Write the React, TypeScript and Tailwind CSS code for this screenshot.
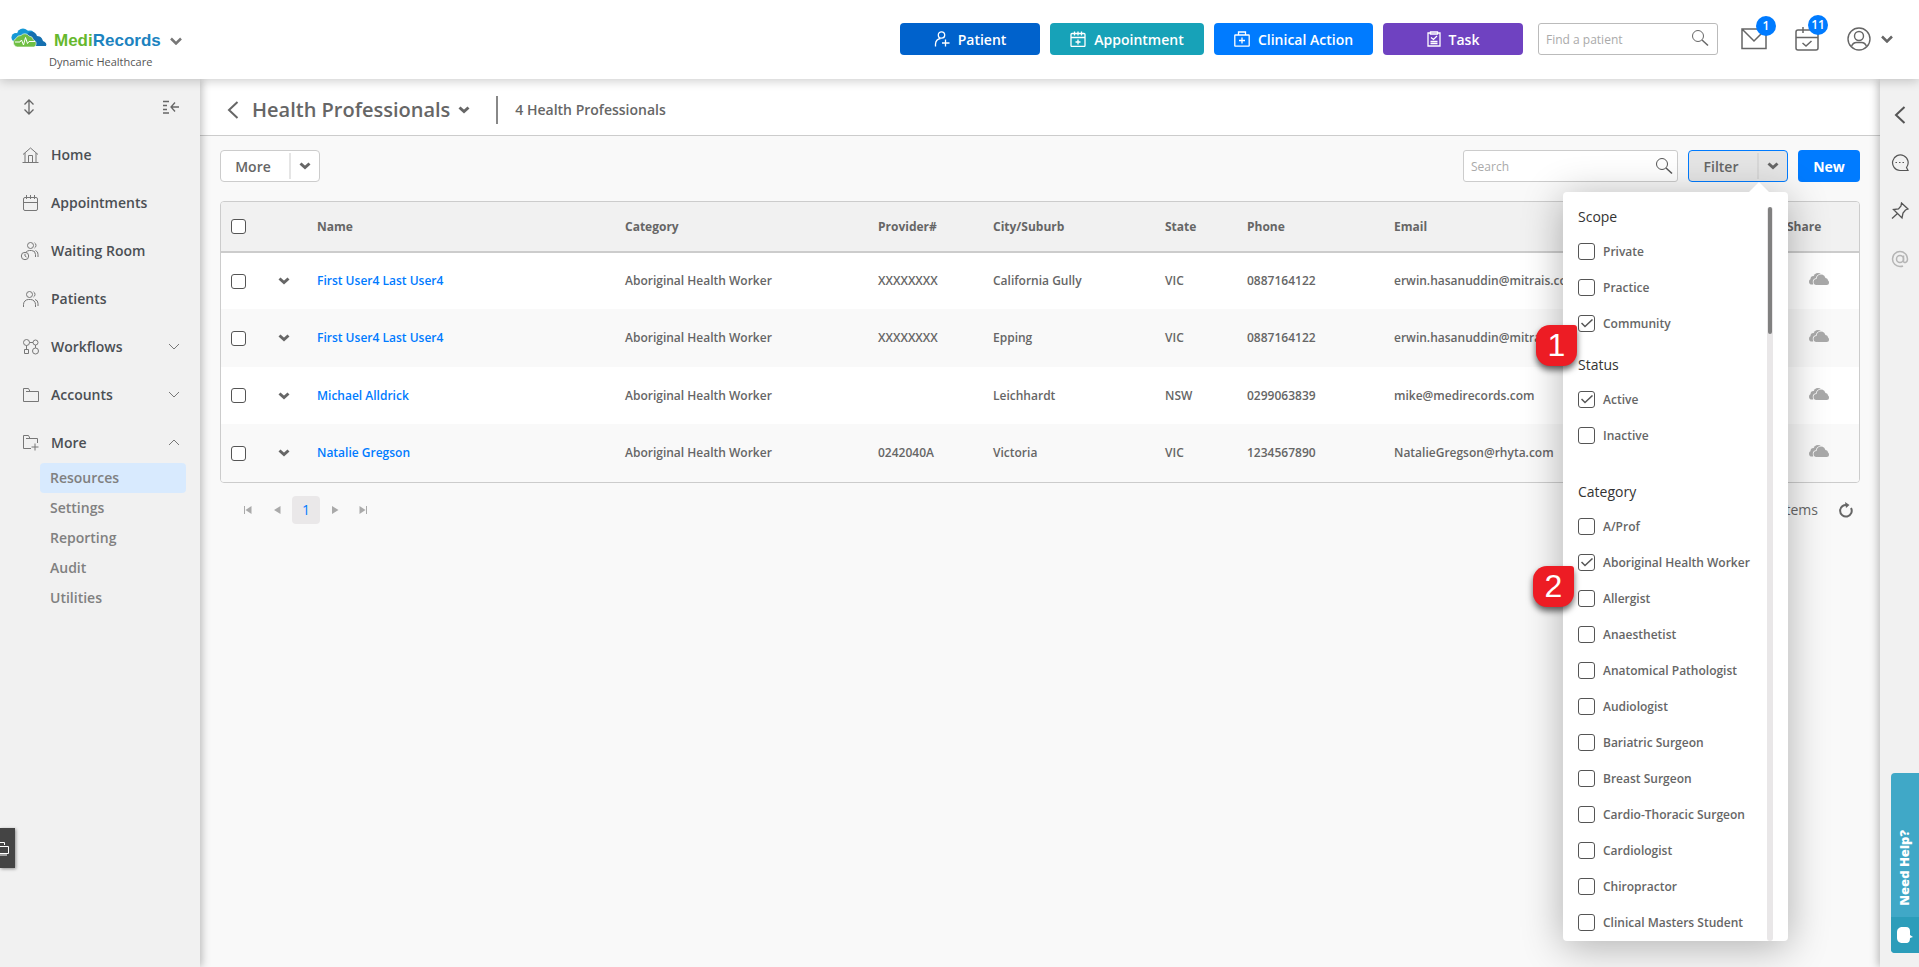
import React from 'react';
import { clsx } from 'clsx';

interface IconProps {
  className?: string;
}

interface SvgProps extends IconProps {
  width: number;
  height: number;
  strokeWidth?: number;
  children: React.ReactNode;
}

const Svg: React.FC<SvgProps> = ({ width, height, strokeWidth = 1, className, children }) => (
  <svg
    width={width}
    height={height}
    viewBox={`0 0 ${width} ${height}`}
    fill="none"
    stroke="currentColor"
    strokeWidth={strokeWidth}
    className={clsx('shrink-0', className)}
    aria-hidden="true"
  >
    {children}
  </svg>
);

/* ---------- Icons ---------- */

const CaretIcon = ({ className }: IconProps) => (
  <Svg width={12} height={8} strokeWidth={3} className={className}>
    <path d="M1.5 1.5 6 5.5l4.500-4" />
  </Svg>
);

const HeaderCaretIcon = ({ className }: IconProps) => (
  <Svg width={12} height={8} strokeWidth={2.500} className={className}>
    <path d="m1 1.500 5 5 5-5" />
  </Svg>
);

const ThinChevron = ({ up = false }: { up?: boolean }) => (
  <Svg width={12} height={8}>
    <path d={up ? 'm1 6 5-5 5 5' : 'm1 1 5 5 5-5'} />
  </Svg>
);

const BackIcon = ({ className }: IconProps) => (
  <Svg width={12} height={18} strokeWidth={2} className={className}>
    <path d="M10.500 1 2 9l8.500 8" />
  </Svg>
);

const SearchIcon = ({ className }: IconProps) => (
  <Svg width={18} height={18} className={className}>
    <circle cx="7" cy="7" r="5.500" />
    <path d="m11 11 6 5.500" strokeWidth={1.5} />
  </Svg>
);

const UpDownIcon = () => (
  <Svg width={12} height={16} strokeWidth={1.3}>
    <path d="M6 1v14M1.500 5.500 6 1l4.500 4.500M1.500 10.500 6 15l4.500-4.500" />
  </Svg>
);

const CollapseIcon = () => (
  <Svg width={18} height={14} strokeWidth={1.3}>
    <path d="M1 1.500h6M1 5.500h4M1 9.500h4M1 13h6M9 7h8M13 2.500 9 7l4 4.500" />
  </Svg>
);

const HomeIcon = () => (
  <Svg width={18} height={18}>
    <path d="M1 8.500 8.500 2 16 8.500M3 7v9.500M14 7v9.500M.5 16.500h16M6.500 16V9.500h4V16" />
  </Svg>
);

const CalendarIcon = () => (
  <Svg width={18} height={18}>
    <rect x="1.500" y="3.500" width="14" height="13" rx="1.500" />
    <path d="M1.500 8.500h14M4.500 1v4M8.500 1v4M12.500 1v4" />
  </Svg>
);

const PatientsIcon = () => (
  <Svg width={18} height={18}>
    <circle cx="7.500" cy="4.500" r="3" />
    <path d="M1.500 17v-2.500a5 5 0 0 1 5-5h2a5 5 0 0 1 5 5V17M11.500 1.800a3 3 0 0 1 0 5.200M13 9.500a4 4 0 0 1 3 4V16" />
  </Svg>
);

const WaitingRoomIcon = () => (
  <Svg width={20} height={20} className="-ml-[2px]">
    <circle cx="10.500" cy="4.500" r="3" />
    <path d="M6 11.200a5 5 0 0 1 3.500-1.700h2a4 4 0 0 1 4 4V16M14.500 1.800a3 3 0 0 1 0 5.200M15.500 9.500a4 4 0 0 1 2.500 4V16" />
    <circle cx="5" cy="15" r="3.700" />
    <path d="M5 12.800V15l1.500 1" />
  </Svg>
);

const WorkflowsIcon = () => (
  <Svg width={18} height={18}>
    <circle cx="4.500" cy="4.500" r="3" />
    <circle cx="13.500" cy="4.500" r="2.500" />
    <circle cx="13.500" cy="13" r="3" />
    <path d="M7.500 4.500H11M13.500 7v3M4.500 7.500v4M2.500 11.500h4v4h-4z" />
  </Svg>
);

const FolderIcon = () => (
  <Svg width={18} height={18}>
    <path d="M1.500 15.500v-13h5l1.500 3h8.500v10zM4 5.500h4" />
  </Svg>
);

const FolderPlusIcon = () => (
  <Svg width={18} height={18}>
    <path d="M9 14.500H1.500v-13h5l1.500 3h7.500V9M4 4.500h4M13 9.500v7M9.500 13h7" />
  </Svg>
);

const PatientAddIcon = () => (
  <Svg width={16} height={16} strokeWidth={1.300}>
    <circle cx="7.500" cy="4" r="3.200" />
    <path d="M1.500 15.500V13a6 6 0 0 1 5-5.500M11.500 8.500v7M8 12h7.500" />
  </Svg>
);

const AppointmentAddIcon = () => (
  <Svg width={16} height={16} strokeWidth={1.300}>
    <rect x="1" y="2.500" width="14" height="13" rx="1" />
    <path d="M1 6.500h14M4.500 .5v4M8 .5v4M11.500 .5v4M8 8.500v5M5.500 11h5" />
  </Svg>
);

const ClinicalIcon = () => (
  <Svg width={16} height={16} strokeWidth={1.300}>
    <rect x=".8" y="4" width="14.400" height="11.200" rx=".5" />
    <path d="M4.500 4V1h7v3M8 6.500v6M5 9.500h6" />
  </Svg>
);

const TaskIcon = () => (
  <Svg width={14} height={16} strokeWidth={1.300}>
    <path d="M3.500 2H1v13h12V2h-2.500M3.500 1h7v2h-7zM4 6.500 6.500 8.500 10 5M3.500 10.500h7M3.500 12.500h7" />
  </Svg>
);

const MailIcon = () => (
  <Svg width={26} height={22} strokeWidth={1.500}>
    <path d="M1 1h24v19.500H1zM1 1l12 12L25 1" />
  </Svg>
);

const CalendarCheckIcon = () => (
  <Svg width={24} height={24} strokeWidth={1.500}>
    <rect x="1" y="3" width="22" height="20" rx="2" />
    <path d="M1 10.500h22M8 0v6M7.500 16l3.500 3 5.500-5" />
  </Svg>
);

const UserIcon = () => (
  <Svg width={24} height={24} strokeWidth={1.400}>
    <circle cx="12" cy="12" r="11" />
    <circle cx="12" cy="9" r="4.500" />
    <path d="M4.500 19.500c1-3 3-4 5-4h5c2 0 4 1 5 4" />
  </Svg>
);

const ChatIcon = () => (
  <Svg width={18} height={18} strokeWidth={1.200}>
    <path d="M15.500 13.500 17 16.500H9A7.800 7.800 0 1 1 15.500 13.500z" />
    <path d="M4.500 8.500h1.500M8 8.500h1.500M11.500 8.500H13" />
  </Svg>
);

const PinIcon = () => (
  <Svg width={18} height={18} strokeWidth={1.300}>
    <path d="m10.500 1 6.500 6-2.500 1-2.500 3-1 5L2.500 7.500l5-.5L10 4zM6.500 11.500l-5.500 5" />
  </Svg>
);

const AtIcon = ({ className }: IconProps) => (
  <Svg width={18} height={18} strokeWidth={1.500} className={className}>
    <circle cx="9" cy="9" r="3.500" />
    <path d="M12.500 5.500V11c0 2.500 4 2 4-2A7.500 7.500 0 1 0 9 16.500c1 0 2 0 3-.5" />
  </Svg>
);

const RefreshIcon = () => (
  <Svg width={16} height={16} strokeWidth={2}>
    <path d="M9.500 3.200A5.800 5.800 0 1 0 13 6" />
    <path d="m7 0 4.500 3L8 6z" fill="currentColor" strokeWidth={0} />
  </Svg>
);

const CloudsIcon = () => (
  <svg width="20" height="12" viewBox="0 0 20 12" fill="#a9a9a9" aria-hidden="true">
    <circle cx="9" cy="4.500" r="4.500" />
    <circle cx="4.500" cy="6" r="3" />
    <circle cx="2.800" cy="8.700" r="2.800" />
    <g stroke="#fff" strokeWidth="1.500">
      <circle cx="12" cy="6" r="4.500" />
      <circle cx="7.500" cy="9" r="3" />
    </g>
    <circle cx="12" cy="6" r="4.500" />
    <circle cx="7.500" cy="9" r="3" />
    <circle cx="16" cy="8" r="3" />
    <rect x="7" y="7" width="13" height="5" rx="2.500" />
  </svg>
);

const Logo = () => (
  <svg width="36" height="20" viewBox="0 0 36 20" aria-hidden="true">
    <g fill="#1698d5">
      <circle cx="5" cy="9.500" r="4.500" />
      <circle cx="12" cy="6.500" r="6" />
      <circle cx="19" cy="7.500" r="5" />
    </g>
    <path d="M16 6c4-4 9-2 10 2 4 0 5.500 3 6 5 3 1 4 3 3 5H22z" fill="#1570b0" />
    <path d="M6 19a4.500 4.500 0 0 1-1-8.500A5 5 0 0 1 10 7.500a5 5 0 0 1 8 .5 5 5 0 0 1 4.500 4c4 1 3 7 0 7z" fill="#6fbf44" stroke="#fff" strokeWidth=".6" />
    <path d="M4 14h5l1.500-2 2 5L14.500 9.500l2 6 1.500-2H24" fill="none" stroke="#fff" />
  </svg>
);

/* ---------- Header ---------- */

const quickActions = [
  { label: 'Patient', icon: PatientAddIcon, style: 'w-[140px] bg-[#0062cc]' },
  { label: 'Appointment', icon: AppointmentAddIcon, style: 'w-[154px] bg-[#17a2b8]' },
  { label: 'Clinical Action', icon: ClinicalIcon, style: 'w-[159px] bg-[#007bff]' },
  { label: 'Task', icon: TaskIcon, style: 'w-[140px] bg-[#6f42c1]' },
];

const CountBadge = ({ count }: { count: number }) => (
  <span className="absolute -top-3 -right-[9px] flex h-5 w-5 items-center justify-center rounded-full bg-[#007bff] text-xs font-semibold text-white">
    {count}
  </span>
);

const Header = () => (
  <header className="relative z-20 flex h-[79px] shrink-0 items-start justify-between bg-white shadow-[0_2px_10px_rgba(0,0,0,0.2)]">
    <div className="pt-6 pl-[11px]">
      <button className="flex h-[28px] items-center text-[#777]">
        <Logo />
        <span className="flex items-center gap-[9px] pt-[5px] pl-[7px]">
          <span className="font-['Liberation_Sans'] text-[17px] font-bold text-[#1c83c0]">
            <span className="text-[#66b82e]">Medi</span>Records
          </span>
          <HeaderCaretIcon />
        </span>
      </button>
      <p className="pl-[38px] text-[11px] leading-5 text-[#555]">Dynamic Healthcare</p>
    </div>

    <div className="flex items-center pt-[23px] pr-[26px]">
      <div className="flex gap-[10px]">
        {quickActions.map(({ label, icon: Icon, style }) => (
          <button
            key={label}
            className={clsx('flex h-8 items-center justify-center gap-2 rounded text-sm font-semibold text-white', style)}
          >
            <Icon />
            <span className="pt-px">{label}</span>
          </button>
        ))}
      </div>
      <div className="relative ml-[15px]">
        <input
          type="text"
          aria-label="Find a patient"
          placeholder="Find a patient"
          className="h-8 w-[180px] rounded-[3px] border border-[#bbb] bg-white pr-8 pl-[7px] text-xs placeholder:text-[#aaa]"
        />
        <SearchIcon className="absolute top-[6px] right-[9px] text-[#666]" />
      </div>
      <button className="relative ml-[23px] text-[#666]" aria-label="Messages">
        <MailIcon />
        <CountBadge count={1} />
      </button>
      <button className="relative ml-[28px] text-[#666]" aria-label="Reminders">
        <CalendarCheckIcon />
        <CountBadge count={11} />
      </button>
      <button className="ml-[28px] flex items-center gap-[10px] text-[#666]" aria-label="Account">
        <UserIcon />
        <HeaderCaretIcon />
      </button>
    </div>
  </header>
);

/* ---------- Sidebar ---------- */

const navigationItems = [
  { label: 'Home', icon: HomeIcon },
  { label: 'Appointments', icon: CalendarIcon },
  { label: 'Waiting Room', icon: WaitingRoomIcon },
  { label: 'Patients', icon: PatientsIcon },
  { label: 'Workflows', icon: WorkflowsIcon, expandable: true },
  { label: 'Accounts', icon: FolderIcon, expandable: true },
  { label: 'More', icon: FolderPlusIcon, expandable: true, open: true },
];

const moreItems = ['Resources', 'Settings', 'Reporting', 'Audit', 'Utilities'];

const Sidebar = () => (
  <aside className="relative z-10 w-[200px] shrink-0 bg-[#f1f1f1] shadow-[2px_0_8px_rgba(0,0,0,0.25)]">
    <div className="flex h-[52px] items-center justify-between pt-1 pr-5 pl-[23px] text-[#666]">
      <button aria-label="Resize menu">
        <UpDownIcon />
      </button>
      <button aria-label="Collapse menu">
        <CollapseIcon />
      </button>
    </div>
    <nav>
      {navigationItems.map(({ label, icon: Icon, expandable, open }) => (
        <a key={label} href="#" className="flex h-12 items-center pr-5 pl-[22px] text-sm font-semibold text-[#4b4f54]">
          <span className="flex w-[29px] items-center text-[#777]">
            <Icon />
          </span>
          <span className="flex-1">{label}</span>
          {expandable && (
            <span className="text-[#777]">
              <ThinChevron up={open} />
            </span>
          )}
        </a>
      ))}
      <div className="-mt-1 pr-[14px] pl-10">
        {moreItems.map((item) => (
          <a
            key={item}
            href="#"
            className={clsx(
              'flex h-[30px] items-center rounded px-[10px] text-sm font-semibold text-[#808080]',
              item === 'Resources' && 'bg-[#d8eafe]'
            )}
          >
            {item}
          </a>
        ))}
      </div>
    </nav>
    <button
      aria-label="Open toolbox"
      className="absolute bottom-[99px] left-0 flex h-10 w-[15px] items-center bg-[#444] text-white shadow-[1px_1px_3px_rgba(0,0,0,0.4)]"
    >
      <Svg width={9} height={15}>
        <path d="M0 1.500h4.500V4M0 5.500h8.500v7H0M0 14h7" />
      </Svg>
    </button>
  </aside>
);

/* ---------- Filter panel ---------- */

const filterGroups = [
  { title: 'Scope', options: ['Private', 'Practice', 'Community'], style: '' },
  { title: 'Status', options: ['Active', 'Inactive'], style: 'mt-[7px]' },
  {
    title: 'Category',
    options: [
      'A/Prof',
      'Aboriginal Health Worker',
      'Allergist',
      'Anaesthetist',
      'Anatomical Pathologist',
      'Audiologist',
      'Bariatric Surgeon',
      'Breast Surgeon',
      'Cardio-Thoracic Surgeon',
      'Cardiologist',
      'Chiropractor',
      'Clinical Masters Student',
    ],
    style: 'mt-[22px]',
  },
];

const selected = ['Community', 'Active', 'Aboriginal Health Worker'];

const FilterOption = ({ label }: { label: string }) => (
  <label className="flex h-9 items-center gap-2 text-xs font-semibold text-[#666]">
    <span className="relative flex">
      <input
        type="checkbox"
        defaultChecked={selected.includes(label)}
        className="peer h-[17px] w-[17px] appearance-none rounded-[3px] border border-[#555] bg-white"
      />
      <span className="pointer-events-none absolute top-[4px] left-[3px] hidden text-[#555] peer-checked:block">
        <Svg width={12} height={9} strokeWidth={1.500}>
          <path d="m.5 4 3.500 3.500L11.500.5" />
        </Svg>
      </span>
    </span>
    <span className="pt-px">{label}</span>
  </label>
);

const Marker = ({ value, className }: { value: number; className: string }) => (
  <span
    className={clsx(
      "absolute flex h-[41px] w-[41px] items-center justify-center rounded-[14px] rounded-tr-[3px] bg-[#ed1c24] pb-[2px] font-['Liberation_Sans'] text-[32px] text-white shadow-[0_4px_6px_rgba(0,0,0,0.6)]",
      className
    )}
  >
    {value}
  </span>
);

const FilterPanel = () => (
  <div className="absolute top-[42px] right-0 z-10 w-[225px] rounded bg-white shadow-[0_6px_40px_rgba(0,0,0,0.3)]">
    <svg width="20" height="10" viewBox="0 0 20 10" className="absolute -top-[10px] right-[19px]" aria-hidden="true">
      <path d="M0 10 10 0l10 10z" fill="#fff" />
    </svg>
    <div className="flex justify-between pt-2 pr-[15px] pl-[15px]">
      <div className="pb-px">
        {filterGroups.map((group) => (
          <fieldset key={group.title} className={group.style}>
            <legend className="flex h-[33px] items-center text-sm text-[#333]">{group.title}</legend>
            {group.options.map((option) => (
              <FilterOption key={option} label={option} />
            ))}
          </fieldset>
        ))}
      </div>
      <div className="mt-[7px] w-[6px] rounded bg-[#e9e7e8] px-px">
        <div className="h-[127px] rounded bg-[#808080]" />
      </div>
    </div>
    <Marker value={1} className="top-[133px] -left-[27px]" />
    <Marker value={2} className="top-[374px] -left-[30px]" />
  </div>
);

/* ---------- Table ---------- */

const professionals = [
  { name: 'First User4 Last User4', provider: 'XXXXXXXX', city: 'California Gully', state: 'VIC', phone: '0887164122', email: 'erwin.hasanuddin@mitrais.com' },
  { name: 'First User4 Last User4', provider: 'XXXXXXXX', city: 'Epping', state: 'VIC', phone: '0887164122', email: 'erwin.hasanuddin@mitrais.com' },
  { name: 'Michael Alldrick', provider: '', city: 'Leichhardt', state: 'NSW', phone: '0299063839', email: 'mike@medirecords.com' },
  { name: 'Natalie Gregson', provider: '0242040A', city: 'Victoria', state: 'VIC', phone: '1234567890', email: 'NatalieGregson@rhyta.com' },
];

const columns = [
  { label: 'Name', width: 'w-[308px]' },
  { label: 'Category', width: 'w-[253px]' },
  { label: 'Provider#', width: 'w-[115px]' },
  { label: 'City/Suburb', width: 'w-[172px]' },
  { label: 'State', width: 'w-[82px]' },
  { label: 'Phone', width: 'w-[147px]' },
  { label: 'Email', width: '' },
  { label: 'Share', width: 'w-[84px]' },
];

const RowCheckbox = ({ label }: { label: string }) => (
  <input
    type="checkbox"
    aria-label={label}
    className="block h-[15px] w-[15px] appearance-none rounded-[3px] border border-[#555] bg-white checked:bg-[#555]"
  />
);

const ProfessionalsTable = () => (
  <div className="overflow-hidden rounded border border-[#ccc]">
    <table className="w-full table-fixed text-left text-xs text-[#666]">
      <thead>
        <tr className="h-[50px] border-b-2 border-[#ccc] bg-[#f1f1f1]">
          <th className="w-[45px] pl-[10px]">
            <RowCheckbox label="Select all" />
          </th>
          <th className="w-[39px]" />
          {columns.map((column) => (
            <th key={column.label} className={clsx('px-3 font-bold', column.width)}>
              {column.label}
            </th>
          ))}
        </tr>
      </thead>
      <tbody className="font-semibold">
        {professionals.map((person, index) => (
          <tr key={index} className="h-[57px] bg-white even:h-[58px] even:bg-[#f9f9f9]">
            <td className="pl-[10px]">
              <RowCheckbox label={`Select ${person.name}`} />
            </td>
            <td className="pl-3">
              <button className="block" aria-label={`Expand ${person.name}`}>
                <CaretIcon />
              </button>
            </td>
            <td className="px-3">
              <a href="#" className="text-[#007bff]">
                {person.name}
              </a>
            </td>
            <td className="px-3">Aboriginal Health Worker</td>
            <td className="px-3">{person.provider}</td>
            <td className="px-3">{person.city}</td>
            <td className="px-3">{person.state}</td>
            <td className="px-3">{person.phone}</td>
            <td className="px-3">{person.email}</td>
            <td className="pb-1 pl-[34px]">
              <CloudsIcon />
            </td>
          </tr>
        ))}
      </tbody>
    </table>
  </div>
);

const Pagination = () => (
  <div className="mt-[13px] flex items-center justify-between pr-[6px] pl-[24px] text-sm text-[#666]">
    <div className="flex items-center text-[#aaa]">
      <button aria-label="First page">
        <svg width="8" height="8" viewBox="0 0 8 8" fill="currentColor">
          <path d="M0 0h1v8H0zM7.500 0v8L1.500 4z" />
        </svg>
      </button>
      <button aria-label="Previous page" className="ml-[22px]">
        <svg width="7" height="8" viewBox="0 0 7 8" fill="currentColor">
          <path d="M6.500 0v8L0 4z" />
        </svg>
      </button>
      <button className="ml-[11px] h-7 w-7 rounded bg-[#eae8e9] text-[#007bff]">1</button>
      <button aria-label="Next page" className="ml-3">
        <svg width="7" height="8" viewBox="0 0 7 8" fill="currentColor">
          <path d="M0 0v8l6.500-4z" />
        </svg>
      </button>
      <button aria-label="Last page" className="ml-5">
        <svg width="8" height="8" viewBox="0 0 8 8" fill="currentColor">
          <path d="M7 0h1v8H7zM.5 0v8l6-4z" />
        </svg>
      </button>
    </div>
    <div className="flex items-center gap-5">
      <span>1 - 4 of 4 items</span>
      <button aria-label="Refresh">
        <RefreshIcon />
      </button>
    </div>
  </div>
);

/* ---------- Main content ---------- */

const Toolbar = () => (
  <div className="flex justify-between">
    <div className="flex h-8 w-[100px] rounded border border-[#ccc] bg-white text-sm font-semibold text-[#666]">
      <button className="flex-1 pt-px pr-1">More</button>
      <button className="my-[2px] w-[30px] border-l-2 border-[#e5e5e5] pl-2" aria-label="More options">
        <CaretIcon />
      </button>
    </div>
    <div className="flex gap-[10px]">
      <div className="relative">
        <input
          type="text"
          aria-label="Search"
          placeholder="Search"
          className="h-8 w-[215px] rounded-[3px] border border-[#ccc] bg-white pr-8 pl-[7px] text-xs placeholder:text-[#aaa]"
        />
        <SearchIcon className="absolute top-[7px] right-[5px] text-[#555]" />
      </div>
      <div className="relative">
        <div className="flex h-8 w-[100px] rounded border border-[#007bff] bg-[#e5e5e5] text-sm font-semibold text-[#666]">
          <button className="flex-1 pt-px pr-1">Filter</button>
          <button className="my-[2px] w-[30px] border-l-2 border-[#d8d8d8] pl-2" aria-label="Filter options">
            <CaretIcon />
          </button>
        </div>
        <FilterPanel />
      </div>
      <button className="h-8 w-[62px] rounded bg-[#007bff] pt-px text-sm font-bold text-white">New</button>
    </div>
  </div>
);

const RightRail = () => (
  <aside className="relative w-[39px] shrink-0 bg-[#f1f1f1] shadow-[-2px_0_8px_rgba(0,0,0,0.25)]">
    <div className="flex flex-col items-center gap-[30px] pt-[27px] text-[#555]">
      <button aria-label="Open panel">
        <BackIcon />
      </button>
      <button aria-label="Chat">
        <ChatIcon />
      </button>
      <button aria-label="Pinned">
        <PinIcon />
      </button>
      <button aria-label="Mentions">
        <AtIcon className="text-[#b5b5b5]" />
      </button>
    </div>
    <button className="absolute right-0 bottom-[14px] flex h-[180px] w-7 flex-col items-center justify-end overflow-hidden rounded-l bg-[#40a8c7] text-white">
      <span className="mb-[11px] rotate-180 font-['Noto_Sans'] text-[13px] font-black [writing-mode:vertical-rl]">
        Need Help?
      </span>
      <span className="flex h-9 w-full items-center justify-center bg-[#2c9dba]">
        <svg width="16" height="18" viewBox="0 0 16 18" fill="#fff" aria-hidden="true">
          <path d="M6 1h3c3 0 4 2 4 4v4l3 2-3 1c0 3-1 5-4 5H6c-4 0-6-2-6-5V6c0-3 2-5 6-5z" />
        </svg>
      </span>
    </button>
  </aside>
);

export default function App() {
  return (
    <div className="flex min-h-screen flex-col bg-[#f9f9f9] font-['Open_Sans',sans-serif]">
      <Header />
      <div className="flex flex-1">
        <Sidebar />
        <main className="min-w-0 flex-1">
          <div className="flex h-[57px] items-center border-b border-[#ccc] bg-white pt-[6px] pl-[27px] text-[#666]">
            <button aria-label="Back">
              <BackIcon />
            </button>
            <button className="ml-[13px] flex items-center gap-2">
              <h1 className="text-xl font-semibold">Health Professionals</h1>
              <CaretIcon />
            </button>
            <span className="ml-[26px] h-7 w-[2px] bg-[#888]" />
            <p className="ml-[17px] text-sm font-semibold">4 Health Professionals</p>
          </div>
          <div className="px-5 pt-[14px]">
            <Toolbar />
            <div className="mt-[19px]">
              <ProfessionalsTable />
            </div>
            <Pagination />
          </div>
        </main>
        <RightRail />
      </div>
    </div>
  );
}
